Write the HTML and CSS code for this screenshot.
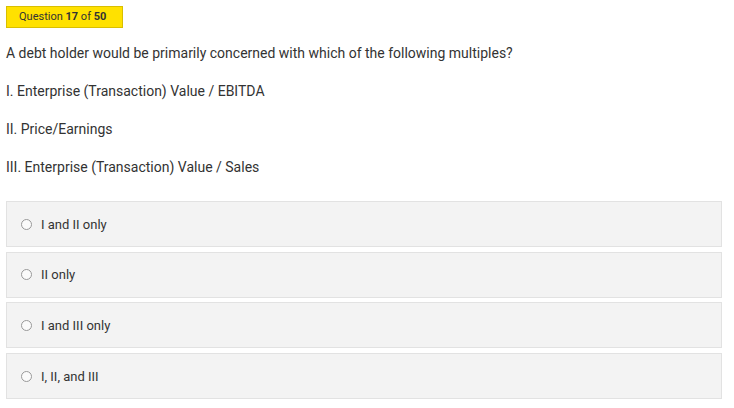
FILE: index.html
```html
<!DOCTYPE html>
<html>
<head>
<meta charset="utf-8">
<link rel="stylesheet" href="styles.css">
</head>
<body>
<div class="page">
  <div class="badge">Question <b>17</b> of <b>50</b></div>
  <p class="line first">A debt holder would be primarily concerned with which of the following multiples?</p>
  <p class="line">I. Enterprise (Transaction) Value / EBITDA</p>
  <p class="line">II. Price/Earnings</p>
  <p class="line">III. Enterprise (Transaction) Value / Sales</p>
  <div class="options">
    <label class="option"><span class="radio"></span><span>I and II only</span></label>
    <label class="option"><span class="radio"></span><span>II only</span></label>
    <label class="option"><span class="radio"></span><span>I and III only</span></label>
    <label class="option"><span class="radio"></span><span>I, II, and III</span></label>
  </div>
</div>
</body>
</html>
```
FILE: styles.css
```css
html, body {
  margin: 0;
  padding: 0;
  background: #fff;
}
.page {
  padding: 6px 12px 0 6px;
  font-family: Roboto, "Liberation Sans", sans-serif;
  color: #333;
  font-size: 14px;
}
.badge {
  display: inline-block;
  background: #ffe100;
  border: 1px solid #d9bf00;
  font-size: 11px;
  line-height: 20px;
  padding: 0 16px 0 12px;
  color: #333;
}
.badge b {
  font-weight: 700;
}
.line {
  margin: 0;
  line-height: 20px;
  height: 38px;
  display: flex;
  align-items: center;
}
.line.first {
  margin-top: 6px;
}
.options {
  display: flex;
  flex-direction: column;
  gap: 4.7px;
  margin-top: 15px;
}
.option {
  display: flex;
  align-items: center;
  gap: 9px;
  height: 44px;
  padding-left: 14px;
  background: #f3f3f3;
  border: 1px solid #e2e2e2;
  font-size: 13px;
  color: #333;
}
.radio {
  width: 9px;
  height: 9px;
  border-radius: 50%;
  border: 1px solid #999;
  background: #fafafa;
}
```
